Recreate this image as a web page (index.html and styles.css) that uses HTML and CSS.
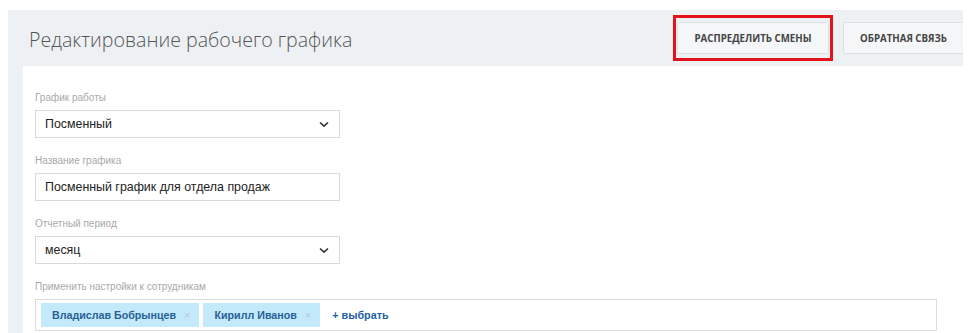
FILE: index.html
```html
<!DOCTYPE html>
<html lang="ru">
<head>
  <meta charset="UTF-8">
  <meta name="viewport" content="width=device-width, initial-scale=1.0">
  <title>Редактирование рабочего графика</title>
  <link rel="stylesheet" href="styles.css">
</head>
<body>

  <div class="panel">
    <div class="header">
      <h1 class="title">Редактирование рабочего графика</h1>
      <div class="actions">
        <span class="highlight">
          <button type="button" class="btn">Распределить смены</button>
        </span>
        <button type="button" class="btn btn-edge">Обратная связь</button>
      </div>
    </div>

    <form class="card" id="scheduleForm">
      <label class="label" for="type">График работы</label>
      <div class="select">
        <span>Посменный</span>
        <svg class="chevron" width="10" height="7" viewBox="0 0 10 7"><path d="M1 1.5 L5 5.2 L9 1.5" fill="none" stroke="#333" stroke-width="1.6"/></svg>
      </div>

      <label class="label" for="name">Название графика</label>
      <div class="input" id="name">Посменный график для отдела продаж</div>

      <label class="label" for="period">Отчетный период</label>
      <div class="select">
        <span>месяц</span>
        <svg class="chevron" width="10" height="7" viewBox="0 0 10 7"><path d="M1 1.5 L5 5.2 L9 1.5" fill="none" stroke="#333" stroke-width="1.6"/></svg>
      </div>

      <label class="label">Применить настройки к сотрудникам</label>
      <div class="tags">
        <span class="tag">Владислав Бобрынцев <span class="tag-x">×</span></span>
        <span class="tag">Кирилл Иванов <span class="tag-x">×</span></span>
        <a class="add" href="#">+ выбрать</a>
      </div>
    </form>
  </div>

</body>
</html>
```

FILE: styles.css
```css
body {
  margin: 0;
  padding: 10px 8px 0 8px;
  background-color: #fff;
  font-family: "Liberation Sans", Arial, sans-serif;
}

.panel {
  background-color: #eef1f4;
  height: 323px;
  overflow: hidden;
}

.header {
  display: flex;
  align-items: center;
  justify-content: space-between;
  height: 56px;
  padding-left: 21px;
}

.title {
  margin: 0;
  font-family: "Open Sans", sans-serif;
  font-weight: 300;
  font-size: 19.6px;
  color: #555;
  position: relative;
  top: 1px;
}

.actions {
  display: flex;
  align-items: center;
  gap: 10px;
}

.highlight {
  display: block;
  border: 3px solid #e3121b;
  padding: 4px 1px;
}

.btn {
  display: block;
  width: 152px;
  height: 32px;
  padding: 0;
  background-color: #f4f6f8;
  border: 1px solid #dde1e6;
  border-radius: 2px;
  font-family: "Open Sans", sans-serif;
  font-weight: 700;
  font-size: 9.7px;
  color: #444;
  text-transform: uppercase;
  cursor: pointer;
}

.btn-edge {
  width: 120px;
  border-right: none;
  border-radius: 2px 0 0 2px;
}

.card {
  display: block;
  background-color: #fff;
  margin-left: 15px;
  padding: 25px 12px 0 12px;
  height: 300px;
}

.label {
  display: block;
  font-size: 10px;
  line-height: 14px;
  color: #a9a9a9;
  margin-bottom: 5px;
}

.select,
.input {
  display: flex;
  align-items: center;
  justify-content: space-between;
  width: 305px;
  height: 28px;
  box-sizing: border-box;
  padding: 0 10px 0 9px;
  border: 1px solid #d9d9d9;
  font-size: 12.4px;
  color: #222;
  margin-bottom: 16px;
}

.chevron {
  display: block;
}

.tags {
  display: flex;
  align-items: center;
  gap: 4px;
  width: 902px;
  height: 32px;
  box-sizing: border-box;
  padding: 0 5px;
  border: 1px solid #dcdcdc;
}

.tag {
  display: flex;
  align-items: center;
  height: 24px;
  padding: 0 9px 0 11px;
  background-color: #c3eafb;
  color: #275f96;
  font-size: 10.7px;
  font-weight: 700;
}

.tag-x {
  margin-left: 8px;
  color: #b8c8d0;
  font-weight: 400;
  font-size: 11px;
}

.add {
  margin-left: 8px;
  color: #2360a6;
  font-size: 10.8px;
  font-weight: 700;
  text-decoration: none;
}
```
